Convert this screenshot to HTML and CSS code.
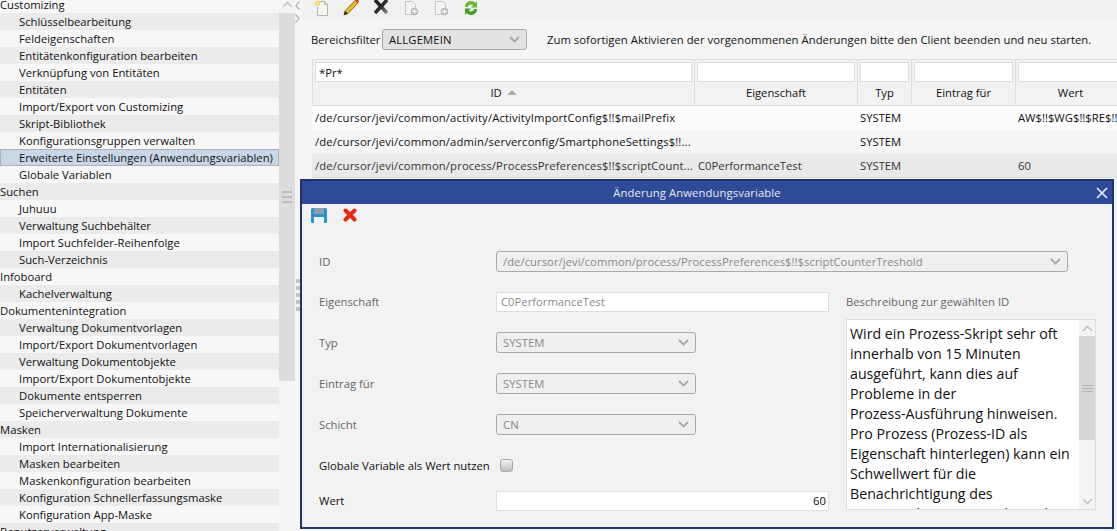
FILE: index.html
```html
<!DOCTYPE html>
<html lang="de">
<head>
<meta charset="utf-8">
<title>Anwendungsvariablen</title>
<link rel="stylesheet" href="styles.css">
</head>
<body>
<div class="app">
  <aside class="side">
    <ul class="tree">
      <li class="group">Customizing</li>
      <li>Schlüsselbearbeitung</li>
      <li>Feldeigenschaften</li>
      <li>Entitätenkonfiguration bearbeiten</li>
      <li>Verknüpfung von Entitäten</li>
      <li>Entitäten</li>
      <li>Import/Export von Customizing</li>
      <li>Skript-Bibliothek</li>
      <li>Konfigurationsgruppen verwalten</li>
      <li class="selected">Erweiterte Einstellungen (Anwendungsvariablen)</li>
      <li>Globale Variablen</li>
      <li class="group">Suchen</li>
      <li>Juhuuu</li>
      <li>Verwaltung Suchbehälter</li>
      <li>Import Suchfelder-Reihenfolge</li>
      <li>Such-Verzeichnis</li>
      <li class="group">Infoboard</li>
      <li>Kachelverwaltung</li>
      <li class="group">Dokumentenintegration</li>
      <li>Verwaltung Dokumentvorlagen</li>
      <li>Import/Export Dokumentvorlagen</li>
      <li>Verwaltung Dokumentobjekte</li>
      <li>Import/Export Dokumentobjekte</li>
      <li>Dokumente entsperren</li>
      <li>Speicherverwaltung Dokumente</li>
      <li class="group">Masken</li>
      <li>Import Internationalisierung</li>
      <li>Masken bearbeiten</li>
      <li>Maskenkonfiguration bearbeiten</li>
      <li>Konfiguration Schnellerfassungsmaske</li>
      <li>Konfiguration App-Maske</li>
      <li class="group">Benutzerverwaltung</li>
    </ul>
    <div class="vbar">
      <div class="vbar-btn"><svg width="11" height="7" viewBox="0 0 11 7"><path d="M1 6l4.500-4.500L10 6" fill="none" stroke="#c4c4c4" stroke-width="1.600"/></svg></div>
      <div class="vbar-thumb"><i></i><i></i><i></i></div>
      <div class="vbar-rest"></div>
    </div>
  </aside>
  <div class="splitter">
    <svg class="chev" width="5" height="9" viewBox="0 0 5 9"><path d="M4.500 .5L.8 4.500l3.700 4" fill="none" stroke="#b5b5b5" stroke-width="1.200"/></svg>
    <svg class="chev" width="5" height="9" viewBox="0 0 5 9"><path d="M.5 .5l3.700 4-3.700 4" fill="none" stroke="#b5b5b5" stroke-width="1.200"/></svg>
    <div class="grip"><i></i><i></i><i></i><i></i><i></i></div>
  </div>
  <main class="main">
    <div class="toolbar">
      <svg class="tool" width="18" height="18" viewBox="0 0 18 18"><path d="M5.500 3.500h7l3 3v11h-10z" fill="#f4f4f0" stroke="#b4b4ac"/><path d="M12.500 3.500v3h3" fill="#ddd" stroke="#b4b4ac"/><circle cx="5.500" cy="5" r="2.600" fill="#f3d35a"/><path d="M5.500 1.500v7M2 5h7" stroke="#f8e9a6"/></svg>
      <svg class="tool" width="18" height="18" viewBox="0 0 18 18"><path d="M3 13L13 2.500l3 2.500L6 15.500 2 17z" fill="#f0b81f" stroke="#6d5410" stroke-width=".8"/><path d="M13 2.500L15 1l2 2-1 2z" fill="#d8382a"/><path d="M2 17l1-4 3 2.500z" fill="#2b2b2b"/></svg>
      <svg class="tool" width="18" height="18" viewBox="0 0 18 18"><defs><linearGradient id="xg" x1="0" y1="0" x2="1" y2="1"><stop offset=".5" stop-color="#262626"/><stop offset="1" stop-color="#8c8c8c"/></linearGradient></defs><path d="M15 2L3 15" stroke="#2e2e2e" stroke-width="3.600"/><path d="M3 2l12 13" stroke="url(#xg)" stroke-width="3.600"/></svg>
      <svg class="tool" width="18" height="18" viewBox="0 0 18 18"><path d="M3.500 3.500h7l3 3v10h-10z" fill="#f4f4f4" stroke="#c4c4c4"/><circle cx="12.500" cy="13.500" r="3.700" fill="#b8b8b8"/><path d="M12.500 11.200v4.600M10.200 13.500h4.600" stroke="#fff" stroke-width="1.400"/></svg>
      <svg class="tool" width="18" height="18" viewBox="0 0 18 18"><path d="M3.500 3.500h7l3 3v10h-10z" fill="#f4f4f4" stroke="#c4c4c4"/><circle cx="12.500" cy="13.500" r="3.700" fill="#b8b8b8"/><path d="M12.500 11.200v4.600M10.200 13.500h4.600" stroke="#fff" stroke-width="1.400"/></svg>
      <svg class="tool" width="18" height="18" viewBox="0 0 18 18"><path d="M3 9a6 6 0 0 1 10.500-4L15 3v6.500H9l2.300-2.200A3.500 3.500 0 0 0 5.700 9z" fill="#6fb52f"/><path d="M15 11a6 6 0 0 1-10.500 4L3 17v-6.500h6l-2.300 2.200a3.500 3.500 0 0 0 5.600-1.700z" fill="#45a024"/></svg>
    </div>
    <div class="filterbar">
      <label class="filter-label">Bereichsfilter</label>
      <div class="combo filter-combo"><span>ALLGEMEIN</span><svg class="caret" width="11" height="7" viewBox="0 0 11 7"><path d="M1 1l4.500 4.500L10 1" fill="none" stroke="#a8a8a8" stroke-width="1.800"/></svg></div>
      <span class="notice">Zum sofortigen Aktivieren der vorgenommenen Änderungen bitte den Client beenden und neu starten.</span>
    </div>
    <div class="table">
      <div class="thead">
        <div class="col c1"><input class="cell-input" value="*Pr*" readonly><div class="th">ID <svg width="10" height="5" viewBox="0 0 10 5"><path d="M0 5l5-5 5 5z" fill="#b0b0b0"/></svg></div></div>
        <div class="col c2"><input class="cell-input" readonly><div class="th">Eigenschaft</div></div>
        <div class="col c3"><input class="cell-input" readonly><div class="th">Typ</div></div>
        <div class="col c4"><input class="cell-input" readonly><div class="th">Eintrag für</div></div>
        <div class="col c5"><input class="cell-input" readonly><div class="th strong">Wert</div></div>
      </div>
      <div class="tr">
        <div class="td c1">/de/cursor/jevi/common/activity/ActivityImportConfig$!!$mailPrefix</div>
        <div class="td c2"></div><div class="td c3">SYSTEM</div><div class="td c4"></div><div class="td c5">AW$!!$WG$!!$RE$!!$</div>
      </div>
      <div class="tr alt">
        <div class="td c1">/de/cursor/jevi/common/admin/serverconfig/SmartphoneSettings$!!...</div>
        <div class="td c2"></div><div class="td c3">SYSTEM</div><div class="td c4"></div><div class="td c5"></div>
      </div>
      <div class="tr cur">
        <div class="td c1">/de/cursor/jevi/common/process/ProcessPreferences$!!$scriptCount...</div>
        <div class="td c2">C0PerformanceTest</div><div class="td c3">SYSTEM</div><div class="td c4"></div><div class="td c5">60</div>
      </div>
    </div>
  </main>
</div>

<section class="dialog">
  <header class="dialog-title"><span>Änderung Anwendungsvariable</span>
    <svg class="close" width="12" height="12" viewBox="0 0 12 12"><path d="M1 1l10 10M11 1L1 11" stroke="#e8edf7" stroke-width="1.700"/></svg>
  </header>
  <div class="dialog-tools">
    <svg width="16" height="15" viewBox="0 0 16 15"><rect width="16" height="15" rx="1.500" fill="#2d93cf"/><rect x="3" y="0" width="10" height="6" fill="#8da0ad"/><rect x="3" y="9" width="10" height="6" fill="#eef3f6"/></svg>
    <svg width="14" height="14" viewBox="0 0 14 14"><path d="M2.500 2.500l9 9M11.500 2.500l-9 9" stroke="#e52a10" stroke-width="4" stroke-linecap="round"/></svg>
  </div>
  <div class="form">
    <div class="form-row id-row">
      <label class="lbl muted">ID</label>
      <div class="combo dis wide"><span>/de/cursor/jevi/common/process/ProcessPreferences$!!$scriptCounterTreshold</span><svg class="caret" width="11" height="7" viewBox="0 0 11 7"><path d="M1 1l4.500 4.500L10 1" fill="none" stroke="#a8a8a8" stroke-width="1.800"/></svg></div>
    </div>
    <div class="form-cols">
      <div class="form-left">
        <div class="form-row"><label class="lbl muted">Eigenschaft</label><div class="textbox dis-text">C0PerformanceTest</div></div>
        <div class="form-row"><label class="lbl muted">Typ</label><div class="combo dis short"><span>SYSTEM</span><svg class="caret" width="11" height="7" viewBox="0 0 11 7"><path d="M1 1l4.500 4.500L10 1" fill="none" stroke="#a8a8a8" stroke-width="1.800"/></svg></div></div>
        <div class="form-row"><label class="lbl muted">Eintrag für</label><div class="combo dis short"><span>SYSTEM</span><svg class="caret" width="11" height="7" viewBox="0 0 11 7"><path d="M1 1l4.500 4.500L10 1" fill="none" stroke="#a8a8a8" stroke-width="1.800"/></svg></div></div>
        <div class="form-row"><label class="lbl muted">Schicht</label><div class="combo dis short"><span>CN</span><svg class="caret" width="11" height="7" viewBox="0 0 11 7"><path d="M1 1l4.500 4.500L10 1" fill="none" stroke="#a8a8a8" stroke-width="1.800"/></svg></div></div>
        <div class="form-row"><label class="lbl">Globale Variable als Wert nutzen</label><div class="check"></div></div>
        <div class="form-row wert-row"><label class="lbl strong">Wert</label><div class="textbox num">60</div></div>
      </div>
      <div class="form-right">
        <div class="desc-label">Beschreibung zur gewählten ID</div>
        <div class="desc">
          <div class="desc-text">Wird ein Prozess-Skript sehr oft<br>innerhalb von 15 Minuten<br>ausgeführt, kann dies auf<br>Probleme in der<br>Prozess-Ausführung hinweisen.<br>Pro Prozess (Prozess-ID als<br>Eigenschaft hinterlegen) kann ein<br>Schwellwert für die<br>Benachrichtigung des<br>System-Administrators hinterlegt</div>
          <div class="desc-bar">
            <svg width="11" height="7" viewBox="0 0 11 7"><path d="M1 6l4.500-4.500L10 6" fill="none" stroke="#c4c4c4" stroke-width="1.600"/></svg>
            <div class="desc-thumb"><i></i><i></i><i></i></div>
            <div class="desc-rest"></div>
            <svg width="11" height="7" viewBox="0 0 11 7"><path d="M1 1l4.500 4.500L10 1" fill="none" stroke="#c4c4c4" stroke-width="1.600"/></svg>
          </div>
        </div>
      </div>
    </div>
  </div>
</section>
</body>
</html>
```
FILE: styles.css
```css
* { box-sizing: border-box; }
html, body { margin: 0; height: 100%; overflow: hidden; }
body { font-family: "Open Sans", "Noto Sans", sans-serif; font-size: 11.27px; color: #111; background: #f5f5f5; }
.app { display: flex; height: 531px; width: 1117px; }

.side { display: flex; width: 295px; height: 100%; overflow: hidden; flex: none; }
.tree { list-style: none; margin: -4px 0 0; padding: 0; width: 279px; flex: none; }
.tree li { height: 17px; line-height: 17px; padding-left: 19px; white-space: nowrap; background: #f7f7f7; }
.tree li:nth-child(even) { background: #ebebeb; }
.tree li.group { padding-left: 0; }
.tree li.selected { background: #c9d6e6; box-shadow: inset 0 0 0 1px #a9b2bd; }
.vbar { width: 16px; display: flex; flex-direction: column; }
.vbar-btn { height: 13px; background: #f4f4f4; display: flex; justify-content: center; padding-top: 1px; flex: none; }
.vbar-thumb { height: 368px; background: #dcdcdc; flex: none; display: flex; flex-direction: column; align-items: center; gap: 3px; padding-top: 178px; }
.vbar-thumb i { display: block; width: 10px; height: 2px; background: #bdbdbd; }
.vbar-rest { flex: 1; background: #f5f5f5; }

.splitter { width: 8px; flex: none; background: #f5f5f5; display: flex; flex-direction: column; align-items: center; padding: 1px 3px 0 0; gap: 4px; position: relative; }
.chev { flex: none; }
.grip { position: absolute; top: 279px; left: 1px; display: flex; flex-direction: column; gap: 3px; }
.grip i { display: block; width: 4px; height: 4px; border-radius: 1px; background: #c0c0c0; }

.main { flex: 1; min-width: 0; overflow: hidden; }
.toolbar { height: 21px; background: #f0f0f0; display: flex; gap: 12px; padding: 0 0 0 9px; align-items: flex-start; overflow: hidden; }
.tool { flex: none; margin-top: -2px; width: 18px; }

.filterbar { display: flex; align-items: center; height: 22px; margin-top: 7px; padding-left: 8px; }
.filter-label { width: 71px; flex: none; }
.combo { display: flex; align-items: center; justify-content: space-between; border: 1px solid #a9a9a9; border-radius: 3px; background: #e2e2e2; padding: 0 6px; height: 21px; letter-spacing: .15px; }
.filter-combo { width: 145px; }
.notice { margin-left: 20px; white-space: nowrap; letter-spacing: .04px; }

.table { margin: 9px 0 0 9px; width: 815px; overflow: hidden; }
.thead { display: flex; height: 47px; background: #f2f2f2; border: 1px solid #dedede; border-right: 0; }
.col { flex: none; border-right: 1px solid #dedede; padding: 2px 2px 0; display: flex; flex-direction: column; }
.c1 { width: 382px; flex: none; }
.c2 { width: 163px; flex: none; }
.c3 { width: 54px; flex: none; }
.c4 { width: 104px; flex: none; }
.c5 { width: 110px; flex: none; }
.cell-input { display: block; width: 100%; height: 20px; border: 1px solid #dedede; background: #fff; font: inherit; color: #111; padding: 0 3px; outline: 0; }
.th { height: 22px; line-height: 21px; text-align: center; }
.th svg { margin: 0 0 2px 2px; }
.strong { font-weight: 500; }
.tr { display: flex; height: 24px; line-height: 24px; background: #fcfcfc; white-space: nowrap; }
.tr.alt { background: #f5f5f5; }
.tr.cur { background: #e9e9e9; border-bottom: 1px solid #dcdcdc; color: #333; }
.td { padding-left: 3px; overflow: hidden; }
.td.c1 { letter-spacing: .14px; }
.td.c2 { padding-left: 4px; }
.td.c3, .td.c4, .td.c5 { padding-left: 3px; }

.dialog { position: absolute; left: 300px; top: 179px; width: 814px; height: 350px; background: #f2f2f2; border: 2px solid #1f3570; display: flex; flex-direction: column; }
.dialog-title { flex: none; height: 23px; background: #2f4a96; color: #e4e9f4; display: flex; align-items: center; justify-content: center; position: relative; padding-right: 20px; letter-spacing: .1px; }
.close { position: absolute; right: 4px; top: 6px; }
.dialog-tools { height: 22px; flex: none; display: flex; align-items: center; gap: 16px; padding: 0 0 0 9px; }
.form { flex: 1; padding: 20px 16px 0 17px; display: flex; flex-direction: column; min-height: 0; }
.form-row { display: flex; align-items: center; height: 41px; flex: none; }
.id-row { height: 30px; margin-bottom: 5px; }
.wert-row { height: 29px; }
.lbl { width: 177px; flex: none; white-space: nowrap; }
.muted { color: #666; }
.dis { color: #8a8a8a; background: #efefef; letter-spacing: .04px; }
.wide { width: 572px; }
.short { width: 200px; }
.form-cols { display: flex; flex: 1; min-height: 0; }
.form-left { width: 525px; flex: none; }
.textbox { width: 333px; height: 20px; line-height: 18px; border: 1px solid #dedede; background: #fff; padding: 0 2px 0 4px; }
.dis-text { color: #8a8a8a; }
.num { text-align: right; }
.check { width: 13px; height: 13px; border: 1px solid #aaa; border-radius: 3px; background: linear-gradient(#f2f2f2, #bdbdbd); margin-left: 4px; }
.form-right { flex: 1; min-width: 0; padding: 0 0 0 2px; }
.desc-label { color: #666; line-height: 16px; margin: 13px 0 9px; }
.desc { display: flex; height: 191px; border: 1px solid #dedede; background: #fff; overflow: hidden; }
.desc-text { flex: 1; padding: 4px 3px; font-size: 14.2px; line-height: 20px; overflow: hidden; white-space: nowrap; color: #111; }
.desc-bar { width: 16px; flex: none; background: #f4f4f4; display: flex; flex-direction: column; align-items: center; padding: 5px 0 4px; }
.desc-thumb { width: 16px; height: 104px; background: #d6d6d6; margin-top: 4px; display: flex; flex-direction: column; gap: 2px; align-items: center; justify-content: center; flex: none; }
.desc-thumb i { display: block; width: 11px; height: 1px; background: #b5b5b5; }
.desc-rest { flex: 1; }
```
